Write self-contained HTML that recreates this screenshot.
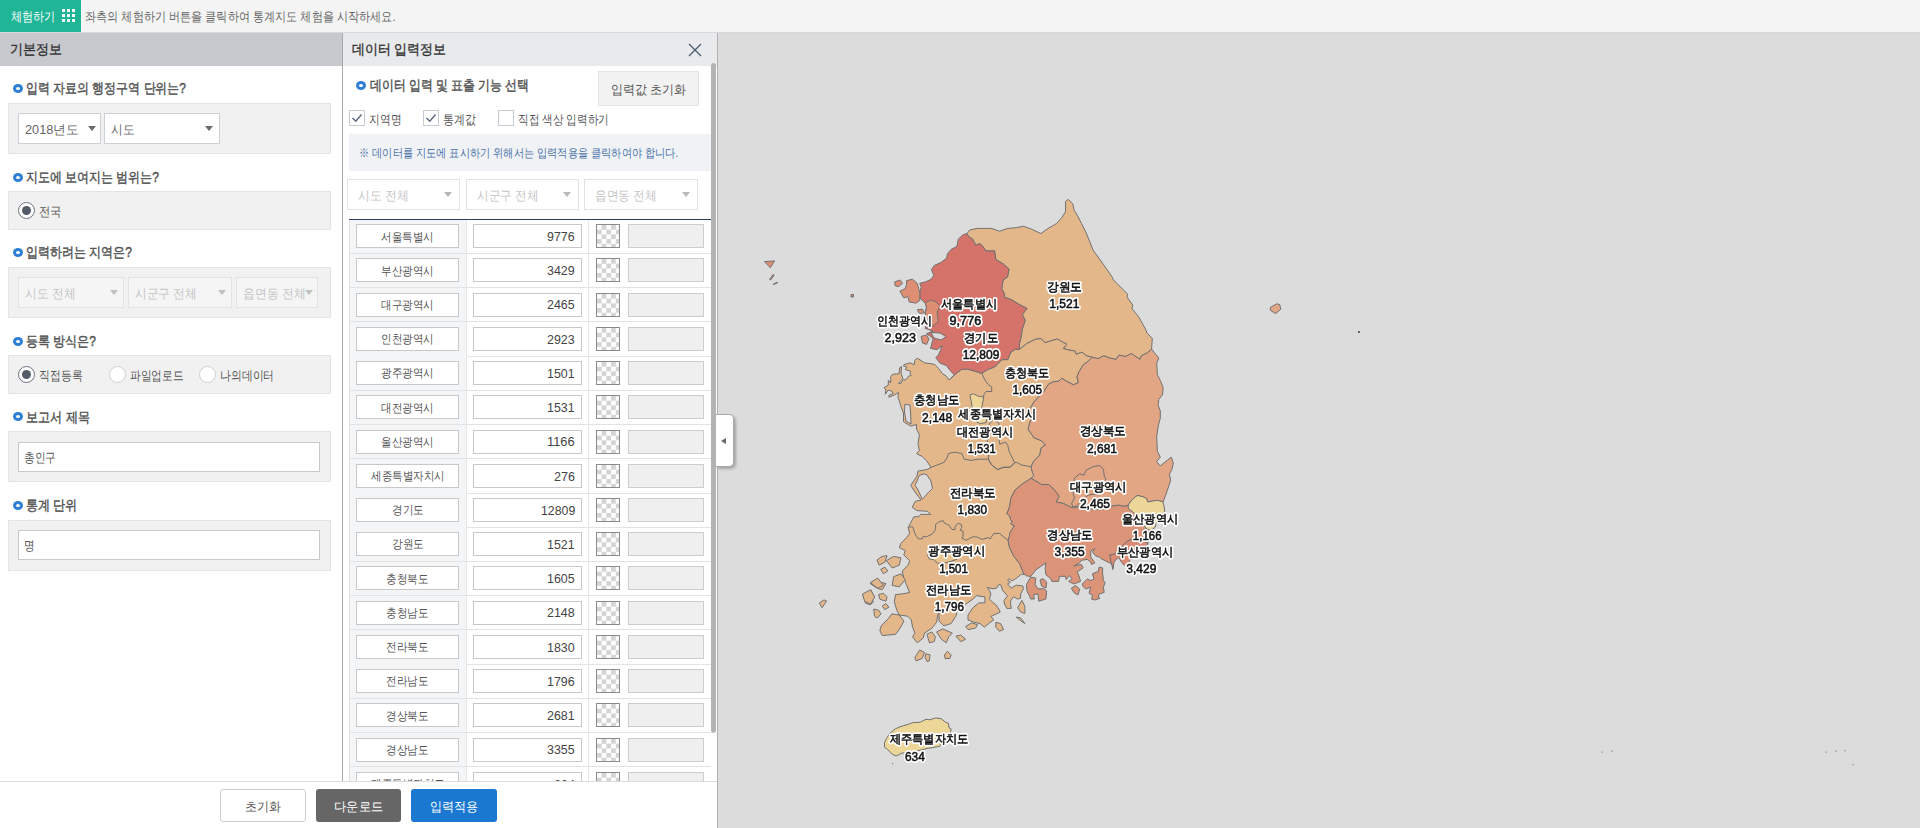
<!DOCTYPE html><html><head><meta charset="utf-8"><style>
*{box-sizing:border-box;margin:0;padding:0}
html,body{width:1920px;height:828px;overflow:hidden;background:#dcdcdc;font-family:"Liberation Sans",sans-serif;color:#555}
.a{position:absolute}
.t{position:absolute;white-space:nowrap;line-height:1;transform-origin:0 50%}
.bul{position:absolute;width:10px;height:9px;border-radius:50%;background:#2f80d5}
.bul:after{content:"";position:absolute;left:3px;top:3px;width:4px;height:3px;border-radius:50%;background:#fff}
.box{position:absolute;background:#f1f1f1;border:1px solid #e4e4e4}
.sel{position:absolute;background:#fff;border:1px solid #ccd0d6}
.arr{position:absolute;width:0;height:0;border-left:4.5px solid transparent;border-right:4.5px solid transparent;border-top:5px solid #6a6a6a}
.dsel{position:absolute;background:#f5f5f5;border:1px solid #e3e3e3}
.radio{position:absolute;width:17px;height:17px;border-radius:50%;border:1.2px solid #6b7280;background:#fff}
.radio.on:after{content:"";position:absolute;left:2.8px;top:2.8px;width:9px;height:9px;border-radius:50%;background:#545c6a}
.radio.off{border-color:#cfcfcf}
.inp{position:absolute;background:#fff;border:1px solid #c9c9c9}
.cb{position:absolute;width:16px;height:16px;border:1px solid #c5cad3;background:#fff}
.lbl{position:absolute;background:#fff;border:1px solid #c8c8c8}
.chk{position:absolute;width:24px;height:24px;border:1px solid #8a8a8a;background:repeating-conic-gradient(#d4d4d4 0 25%,#fff 0 50%) 0 0/9.4px 9.4px}
.cin{position:absolute;background:#efefef;border:1px solid #cdcdcd}
</style></head><body>
<div class="a" style="left:0;top:0;width:1920px;height:32px;background:#f4f4f4"></div>
<div class="a" style="left:0;top:0;width:81px;height:32px;background:#21b598"></div>
<div class="a" style="left:0;top:32px;width:1920px;height:1px;background:#d7d8db"></div>
<div class="t" style="left:11.10px;top:9.50px;font-size:13px;color:#fff;font-weight:normal;transform:scaleX(0.8538);">체험하기</div>
<div class="a" style="left:62px;top:9px;width:3px;height:3px;background:#fff"></div>
<div class="a" style="left:62px;top:14px;width:3px;height:3px;background:#fff"></div>
<div class="a" style="left:62px;top:19px;width:3px;height:3px;background:#fff"></div>
<div class="a" style="left:67px;top:9px;width:3px;height:3px;background:#fff"></div>
<div class="a" style="left:67px;top:14px;width:3px;height:3px;background:#fff"></div>
<div class="a" style="left:67px;top:19px;width:3px;height:3px;background:#fff"></div>
<div class="a" style="left:72px;top:9px;width:3px;height:3px;background:#fff"></div>
<div class="a" style="left:72px;top:14px;width:3px;height:3px;background:#fff"></div>
<div class="a" style="left:72px;top:19px;width:3px;height:3px;background:#fff"></div>
<div class="t" style="left:85.00px;top:9.50px;font-size:13px;color:#666;font-weight:normal;transform:scaleX(0.8547);">좌측의 체험하기 버튼을 클릭하여 통계지도 체험을 시작하세요.</div>
<div class="a" style="left:0;top:33px;width:342px;height:748px;background:#fff"></div>
<div class="a" style="left:0;top:33px;width:342px;height:33px;background:#c8c9ce"></div>
<div class="t" style="left:9.50px;top:42.20px;font-size:14px;color:#333;font-weight:normal;-webkit-text-stroke:0.35px #333;transform:scaleX(0.9286);">기본정보</div>
<div class="a" style="left:342px;top:33px;width:1px;height:748px;background:#a9a9a9"></div>
<div class="bul" style="left:13px;top:83.9px"></div>
<div class="t" style="left:25.50px;top:81.40px;font-size:14px;color:#555;font-weight:normal;-webkit-text-stroke:0.45px #555;transform:scaleX(0.8535);">입력 자료의 행정구역 단위는?</div>
<div class="box" style="left:8px;top:103px;width:323px;height:51px"></div>
<div class="sel" style="left:18px;top:113px;width:83px;height:31px"><div class="arr" style="left:69px;top:12px"></div></div>
<div class="t" style="left:25.10px;top:122.90px;font-size:13px;color:#666;font-weight:normal;transform:scaleX(0.9814);">2018년도</div>
<div class="sel" style="left:104px;top:113px;width:116px;height:31px"><div class="arr" style="left:100px;top:12px"></div></div>
<div class="t" style="left:111.40px;top:122.90px;font-size:13px;color:#666;font-weight:normal;transform:scaleX(0.9038);">시도</div>
<div class="bul" style="left:13px;top:172.5px"></div>
<div class="t" style="left:25.50px;top:170.00px;font-size:14px;color:#555;font-weight:normal;-webkit-text-stroke:0.45px #555;transform:scaleX(0.8549);">지도에 보여지는 범위는?</div>
<div class="box" style="left:8px;top:191px;width:323px;height:39px"></div>
<div class="radio on" style="left:18px;top:202px"></div>
<div class="t" style="left:38.80px;top:204.80px;font-size:13px;color:#555;font-weight:normal;transform:scaleX(0.8692);">전국</div>
<div class="bul" style="left:13px;top:247.5px"></div>
<div class="t" style="left:25.50px;top:245.00px;font-size:14px;color:#555;font-weight:normal;-webkit-text-stroke:0.45px #555;transform:scaleX(0.8570);">입력하려는 지역은?</div>
<div class="box" style="left:8px;top:267px;width:323px;height:51px"></div>
<div class="dsel" style="left:18px;top:277px;width:106px;height:31px"><div class="arr" style="left:91px;top:12px;border-top-color:#c0c0c0"></div></div>
<div class="t" style="left:24.90px;top:286.90px;font-size:13px;color:#c4c4c4;font-weight:normal;transform:scaleX(0.9079);">시도 전체</div>
<div class="dsel" style="left:128px;top:277px;width:104px;height:31px"><div class="arr" style="left:89px;top:12px;border-top-color:#c0c0c0"></div></div>
<div class="t" style="left:135.30px;top:286.90px;font-size:13px;color:#c4c4c4;font-weight:normal;transform:scaleX(0.9020);">시군구 전체</div>
<div class="dsel" style="left:236px;top:277px;width:82px;height:31px"><div class="arr" style="left:68px;top:12px;border-top-color:#c0c0c0"></div></div>
<div class="t" style="left:242.60px;top:286.90px;font-size:13px;color:#c4c4c4;font-weight:normal;transform:scaleX(0.9107);">읍면동 전체</div>
<div class="bul" style="left:13px;top:336.5px"></div>
<div class="t" style="left:25.50px;top:334.00px;font-size:14px;color:#555;font-weight:normal;-webkit-text-stroke:0.45px #555;transform:scaleX(0.8569);">등록 방식은?</div>
<div class="box" style="left:8px;top:355px;width:323px;height:39px"></div>
<div class="radio on" style="left:18px;top:366px"></div>
<div class="t" style="left:38.80px;top:368.50px;font-size:13px;color:#555;font-weight:normal;transform:scaleX(0.8346);">직접등록</div>
<div class="radio off" style="left:109px;top:366px"></div>
<div class="t" style="left:129.50px;top:368.50px;font-size:13px;color:#555;font-weight:normal;transform:scaleX(0.8262);">파일업로드</div>
<div class="radio off" style="left:199px;top:366px"></div>
<div class="t" style="left:219.80px;top:368.50px;font-size:13px;color:#555;font-weight:normal;transform:scaleX(0.8354);">나의데이터</div>
<div class="bul" style="left:13px;top:412.1px"></div>
<div class="t" style="left:25.50px;top:409.60px;font-size:14px;color:#555;font-weight:normal;-webkit-text-stroke:0.45px #555;transform:scaleX(0.8621);">보고서 제목</div>
<div class="box" style="left:8px;top:431px;width:323px;height:51px"></div>
<div class="inp" style="left:18px;top:442px;width:302px;height:30px"></div>
<div class="t" style="left:23.60px;top:451.40px;font-size:13px;color:#555;font-weight:normal;transform:scaleX(0.8256);">총인구</div>
<div class="bul" style="left:13px;top:500.5px"></div>
<div class="t" style="left:25.50px;top:498.00px;font-size:14px;color:#555;font-weight:normal;-webkit-text-stroke:0.45px #555;transform:scaleX(0.8599);">통계 단위</div>
<div class="box" style="left:8px;top:520px;width:323px;height:51px"></div>
<div class="inp" style="left:18px;top:530px;width:302px;height:30px"></div>
<div class="t" style="left:23.60px;top:538.90px;font-size:13px;color:#555;font-weight:normal;transform:scaleX(0.8231);">명</div>
<div class="a" style="left:343px;top:33px;width:374px;height:748px;background:#fff;overflow:hidden">
<div class="a" style="left:0;top:0;width:374px;height:33px;background:#e9eaec"></div>
</div>
<div class="t" style="left:352.20px;top:41.80px;font-size:14px;color:#333;font-weight:normal;-webkit-text-stroke:0.35px #333;transform:scaleX(0.9255);">데이터 입력정보</div>
<svg class="a" style="left:687.8px;top:42.9px" width="14" height="14" viewBox="0 0 14 14"><path d="M1 1L13 13M13 1L1 13" stroke="#4b5a6e" stroke-width="1.3" fill="none"/></svg>
<div class="bul" style="left:356px;top:80.8px"></div>
<div class="t" style="left:369.50px;top:78.00px;font-size:14px;color:#555;font-weight:normal;-webkit-text-stroke:0.45px #555;transform:scaleX(0.8498);">데이터 입력 및 표출 기능 선택</div>
<div class="a" style="left:598px;top:71px;width:101px;height:35px;background:#f2f2f2;border:1px solid #e4e4e4"></div>
<div class="t" style="left:610.80px;top:83.00px;font-size:13px;color:#555;font-weight:normal;transform:scaleX(0.9250);">입력값 초기화</div>
<div class="cb" style="left:348.5px;top:110px"></div>
<svg class="a" style="left:348.5px;top:110px" width="16" height="16" viewBox="0 0 16 16"><path d="M3.5 8L6.8 11.2L12.5 4.5" stroke="#5b6b80" stroke-width="1.5" fill="none"/></svg>
<div class="t" style="left:368.50px;top:112.70px;font-size:13px;color:#555;font-weight:normal;transform:scaleX(0.8308);">지역명</div>
<div class="cb" style="left:422.5px;top:110px"></div>
<svg class="a" style="left:422.5px;top:110px" width="16" height="16" viewBox="0 0 16 16"><path d="M3.5 8L6.8 11.2L12.5 4.5" stroke="#5b6b80" stroke-width="1.5" fill="none"/></svg>
<div class="t" style="left:442.80px;top:112.70px;font-size:13px;color:#555;font-weight:normal;transform:scaleX(0.8462);">통계값</div>
<div class="cb" style="left:497.5px;top:110px"></div>
<div class="t" style="left:517.80px;top:112.70px;font-size:13px;color:#555;font-weight:normal;transform:scaleX(0.8181);">직접 색상 입력하기</div>
<div class="a" style="left:349px;top:134px;width:362px;height:37px;background:#f0f2f5"></div>
<div class="t" style="left:358.80px;top:147.20px;font-size:12px;color:#4a72a8;font-weight:normal;transform:scaleX(0.8525);">※ 데이터를 지도에 표시하기 위해서는 입력적용을 클릭하여야 합니다.</div>
<div class="a" style="left:347px;top:179px;width:113px;height:31px;background:#fff;border:1px solid #e2e2e2"><div class="arr" style="left:96px;top:12px;border-top-color:#b9b9b9"></div></div>
<div class="t" style="left:357.50px;top:189.00px;font-size:13px;color:#c4c4c4;font-weight:normal;transform:scaleX(0.9097);">시도 전체</div>
<div class="a" style="left:466px;top:179px;width:113px;height:31px;background:#fff;border:1px solid #e2e2e2"><div class="arr" style="left:96px;top:12px;border-top-color:#b9b9b9"></div></div>
<div class="t" style="left:476.70px;top:189.00px;font-size:13px;color:#c4c4c4;font-weight:normal;transform:scaleX(0.8947);">시군구 전체</div>
<div class="a" style="left:584px;top:179px;width:114px;height:31px;background:#fff;border:1px solid #e2e2e2"><div class="arr" style="left:97px;top:12px;border-top-color:#b9b9b9"></div></div>
<div class="t" style="left:595.10px;top:189.00px;font-size:13px;color:#c4c4c4;font-weight:normal;transform:scaleX(0.9005);">읍면동 전체</div>
<div class="a" style="left:343px;top:219px;width:374px;height:562px;overflow:hidden">
<div class="a" style="left:6px;top:0px;width:362px;height:1.2px;background:#2b3d5e"></div>
<div class="a" style="left:6px;top:0.50px;width:117px;height:34.22px;background:#f4f5f7"></div>
<div class="a" style="left:6px;top:34.02px;width:362px;height:1px;background:#e3e3e3"></div>
<div class="lbl" style="left:13px;top:5.20px;width:103px;height:24px"></div>
<div class="lbl" style="left:130px;top:5.20px;width:109px;height:24px"></div>
<div class="chk" style="left:253px;top:5.20px"></div>
<div class="cin" style="left:285px;top:5.20px;width:76px;height:24px"></div>
<div class="a" style="left:6px;top:34.72px;width:117px;height:34.22px;background:#f4f5f7"></div>
<div class="a" style="left:6px;top:68.24px;width:362px;height:1px;background:#e3e3e3"></div>
<div class="lbl" style="left:13px;top:39.42px;width:103px;height:24px"></div>
<div class="lbl" style="left:130px;top:39.42px;width:109px;height:24px"></div>
<div class="chk" style="left:253px;top:39.42px"></div>
<div class="cin" style="left:285px;top:39.42px;width:76px;height:24px"></div>
<div class="a" style="left:6px;top:68.94px;width:117px;height:34.22px;background:#f4f5f7"></div>
<div class="a" style="left:6px;top:102.46px;width:362px;height:1px;background:#e3e3e3"></div>
<div class="lbl" style="left:13px;top:73.64px;width:103px;height:24px"></div>
<div class="lbl" style="left:130px;top:73.64px;width:109px;height:24px"></div>
<div class="chk" style="left:253px;top:73.64px"></div>
<div class="cin" style="left:285px;top:73.64px;width:76px;height:24px"></div>
<div class="a" style="left:6px;top:103.16px;width:117px;height:34.22px;background:#f4f5f7"></div>
<div class="a" style="left:6px;top:136.68px;width:362px;height:1px;background:#e3e3e3"></div>
<div class="lbl" style="left:13px;top:107.86px;width:103px;height:24px"></div>
<div class="lbl" style="left:130px;top:107.86px;width:109px;height:24px"></div>
<div class="chk" style="left:253px;top:107.86px"></div>
<div class="cin" style="left:285px;top:107.86px;width:76px;height:24px"></div>
<div class="a" style="left:6px;top:137.38px;width:117px;height:34.22px;background:#f4f5f7"></div>
<div class="a" style="left:6px;top:170.90px;width:362px;height:1px;background:#e3e3e3"></div>
<div class="lbl" style="left:13px;top:142.08px;width:103px;height:24px"></div>
<div class="lbl" style="left:130px;top:142.08px;width:109px;height:24px"></div>
<div class="chk" style="left:253px;top:142.08px"></div>
<div class="cin" style="left:285px;top:142.08px;width:76px;height:24px"></div>
<div class="a" style="left:6px;top:171.60px;width:117px;height:34.22px;background:#f4f5f7"></div>
<div class="a" style="left:6px;top:205.12px;width:362px;height:1px;background:#e3e3e3"></div>
<div class="lbl" style="left:13px;top:176.30px;width:103px;height:24px"></div>
<div class="lbl" style="left:130px;top:176.30px;width:109px;height:24px"></div>
<div class="chk" style="left:253px;top:176.30px"></div>
<div class="cin" style="left:285px;top:176.30px;width:76px;height:24px"></div>
<div class="a" style="left:6px;top:205.82px;width:117px;height:34.22px;background:#f4f5f7"></div>
<div class="a" style="left:6px;top:239.34px;width:362px;height:1px;background:#e3e3e3"></div>
<div class="lbl" style="left:13px;top:210.52px;width:103px;height:24px"></div>
<div class="lbl" style="left:130px;top:210.52px;width:109px;height:24px"></div>
<div class="chk" style="left:253px;top:210.52px"></div>
<div class="cin" style="left:285px;top:210.52px;width:76px;height:24px"></div>
<div class="a" style="left:6px;top:240.04px;width:117px;height:34.22px;background:#f4f5f7"></div>
<div class="a" style="left:6px;top:273.56px;width:362px;height:1px;background:#e3e3e3"></div>
<div class="lbl" style="left:13px;top:244.74px;width:103px;height:24px"></div>
<div class="lbl" style="left:130px;top:244.74px;width:109px;height:24px"></div>
<div class="chk" style="left:253px;top:244.74px"></div>
<div class="cin" style="left:285px;top:244.74px;width:76px;height:24px"></div>
<div class="a" style="left:6px;top:274.26px;width:117px;height:34.22px;background:#f4f5f7"></div>
<div class="a" style="left:6px;top:307.78px;width:362px;height:1px;background:#e3e3e3"></div>
<div class="lbl" style="left:13px;top:278.96px;width:103px;height:24px"></div>
<div class="lbl" style="left:130px;top:278.96px;width:109px;height:24px"></div>
<div class="chk" style="left:253px;top:278.96px"></div>
<div class="cin" style="left:285px;top:278.96px;width:76px;height:24px"></div>
<div class="a" style="left:6px;top:308.48px;width:117px;height:34.22px;background:#f4f5f7"></div>
<div class="a" style="left:6px;top:342.00px;width:362px;height:1px;background:#e3e3e3"></div>
<div class="lbl" style="left:13px;top:313.18px;width:103px;height:24px"></div>
<div class="lbl" style="left:130px;top:313.18px;width:109px;height:24px"></div>
<div class="chk" style="left:253px;top:313.18px"></div>
<div class="cin" style="left:285px;top:313.18px;width:76px;height:24px"></div>
<div class="a" style="left:6px;top:342.70px;width:117px;height:34.22px;background:#f4f5f7"></div>
<div class="a" style="left:6px;top:376.22px;width:362px;height:1px;background:#e3e3e3"></div>
<div class="lbl" style="left:13px;top:347.40px;width:103px;height:24px"></div>
<div class="lbl" style="left:130px;top:347.40px;width:109px;height:24px"></div>
<div class="chk" style="left:253px;top:347.40px"></div>
<div class="cin" style="left:285px;top:347.40px;width:76px;height:24px"></div>
<div class="a" style="left:6px;top:376.92px;width:117px;height:34.22px;background:#f4f5f7"></div>
<div class="a" style="left:6px;top:410.44px;width:362px;height:1px;background:#e3e3e3"></div>
<div class="lbl" style="left:13px;top:381.62px;width:103px;height:24px"></div>
<div class="lbl" style="left:130px;top:381.62px;width:109px;height:24px"></div>
<div class="chk" style="left:253px;top:381.62px"></div>
<div class="cin" style="left:285px;top:381.62px;width:76px;height:24px"></div>
<div class="a" style="left:6px;top:411.14px;width:117px;height:34.22px;background:#f4f5f7"></div>
<div class="a" style="left:6px;top:444.66px;width:362px;height:1px;background:#e3e3e3"></div>
<div class="lbl" style="left:13px;top:415.84px;width:103px;height:24px"></div>
<div class="lbl" style="left:130px;top:415.84px;width:109px;height:24px"></div>
<div class="chk" style="left:253px;top:415.84px"></div>
<div class="cin" style="left:285px;top:415.84px;width:76px;height:24px"></div>
<div class="a" style="left:6px;top:445.36px;width:117px;height:34.22px;background:#f4f5f7"></div>
<div class="a" style="left:6px;top:478.88px;width:362px;height:1px;background:#e3e3e3"></div>
<div class="lbl" style="left:13px;top:450.06px;width:103px;height:24px"></div>
<div class="lbl" style="left:130px;top:450.06px;width:109px;height:24px"></div>
<div class="chk" style="left:253px;top:450.06px"></div>
<div class="cin" style="left:285px;top:450.06px;width:76px;height:24px"></div>
<div class="a" style="left:6px;top:479.58px;width:117px;height:34.22px;background:#f4f5f7"></div>
<div class="a" style="left:6px;top:513.10px;width:362px;height:1px;background:#e3e3e3"></div>
<div class="lbl" style="left:13px;top:484.28px;width:103px;height:24px"></div>
<div class="lbl" style="left:130px;top:484.28px;width:109px;height:24px"></div>
<div class="chk" style="left:253px;top:484.28px"></div>
<div class="cin" style="left:285px;top:484.28px;width:76px;height:24px"></div>
<div class="a" style="left:6px;top:513.80px;width:117px;height:34.22px;background:#f4f5f7"></div>
<div class="a" style="left:6px;top:547.32px;width:362px;height:1px;background:#e3e3e3"></div>
<div class="lbl" style="left:13px;top:518.50px;width:103px;height:24px"></div>
<div class="lbl" style="left:130px;top:518.50px;width:109px;height:24px"></div>
<div class="chk" style="left:253px;top:518.50px"></div>
<div class="cin" style="left:285px;top:518.50px;width:76px;height:24px"></div>
<div class="a" style="left:6px;top:548.02px;width:117px;height:34.22px;background:#f4f5f7"></div>
<div class="a" style="left:6px;top:581.54px;width:362px;height:1px;background:#e3e3e3"></div>
<div class="lbl" style="left:13px;top:552.72px;width:103px;height:24px"></div>
<div class="lbl" style="left:130px;top:552.72px;width:109px;height:24px"></div>
<div class="chk" style="left:253px;top:552.72px"></div>
<div class="cin" style="left:285px;top:552.72px;width:76px;height:24px"></div>
<div class="a" style="left:6px;top:1.5px;width:1px;height:600px;background:#e3e3e3"></div>
<div class="a" style="left:123px;top:1.5px;width:1px;height:600px;background:#e6e6e6"></div>
<div class="a" style="left:245px;top:1.5px;width:1px;height:600px;background:#e6e6e6"></div>
<div class="t" style="left:38.12px;top:11.50px;font-size:12px;color:#555;font-weight:normal;transform:scaleX(0.8792);">서울특별시</div>
<div class="t" style="left:204.40px;top:11.00px;font-size:13px;color:#444;font-weight:normal;transform:scaleX(0.9543);">9776</div>
<div class="t" style="left:38.12px;top:45.72px;font-size:12px;color:#555;font-weight:normal;transform:scaleX(0.8792);">부산광역시</div>
<div class="t" style="left:204.40px;top:45.22px;font-size:13px;color:#444;font-weight:normal;transform:scaleX(0.9543);">3429</div>
<div class="t" style="left:38.12px;top:79.94px;font-size:12px;color:#555;font-weight:normal;transform:scaleX(0.8792);">대구광역시</div>
<div class="t" style="left:204.40px;top:79.44px;font-size:13px;color:#444;font-weight:normal;transform:scaleX(0.9543);">2465</div>
<div class="t" style="left:38.12px;top:114.16px;font-size:12px;color:#555;font-weight:normal;transform:scaleX(0.8792);">인천광역시</div>
<div class="t" style="left:204.40px;top:113.66px;font-size:13px;color:#444;font-weight:normal;transform:scaleX(0.9543);">2923</div>
<div class="t" style="left:38.12px;top:148.38px;font-size:12px;color:#555;font-weight:normal;transform:scaleX(0.8792);">광주광역시</div>
<div class="t" style="left:204.40px;top:147.88px;font-size:13px;color:#444;font-weight:normal;transform:scaleX(0.9543);">1501</div>
<div class="t" style="left:38.12px;top:182.60px;font-size:12px;color:#555;font-weight:normal;transform:scaleX(0.8792);">대전광역시</div>
<div class="t" style="left:204.40px;top:182.10px;font-size:13px;color:#444;font-weight:normal;transform:scaleX(0.9543);">1531</div>
<div class="t" style="left:38.12px;top:216.82px;font-size:12px;color:#555;font-weight:normal;transform:scaleX(0.8792);">울산광역시</div>
<div class="t" style="left:204.40px;top:216.32px;font-size:13px;color:#444;font-weight:normal;transform:scaleX(0.9868);">1166</div>
<div class="t" style="left:27.68px;top:251.04px;font-size:12px;color:#555;font-weight:normal;transform:scaleX(0.8768);">세종특별자치시</div>
<div class="t" style="left:211.05px;top:250.54px;font-size:13px;color:#444;font-weight:normal;transform:scaleX(0.9653);">276</div>
<div class="t" style="left:48.58px;top:285.26px;font-size:12px;color:#555;font-weight:normal;transform:scaleX(0.8847);">경기도</div>
<div class="t" style="left:197.75px;top:284.76px;font-size:13px;color:#444;font-weight:normal;transform:scaleX(0.9473);">12809</div>
<div class="t" style="left:48.58px;top:319.48px;font-size:12px;color:#555;font-weight:normal;transform:scaleX(0.8847);">강원도</div>
<div class="t" style="left:204.40px;top:318.98px;font-size:13px;color:#444;font-weight:normal;transform:scaleX(0.9543);">1521</div>
<div class="t" style="left:43.35px;top:353.70px;font-size:12px;color:#555;font-weight:normal;transform:scaleX(0.8812);">충청북도</div>
<div class="t" style="left:204.40px;top:353.20px;font-size:13px;color:#444;font-weight:normal;transform:scaleX(0.9543);">1605</div>
<div class="t" style="left:43.35px;top:387.92px;font-size:12px;color:#555;font-weight:normal;transform:scaleX(0.8812);">충청남도</div>
<div class="t" style="left:204.40px;top:387.42px;font-size:13px;color:#444;font-weight:normal;transform:scaleX(0.9543);">2148</div>
<div class="t" style="left:43.35px;top:422.14px;font-size:12px;color:#555;font-weight:normal;transform:scaleX(0.8812);">전라북도</div>
<div class="t" style="left:204.40px;top:421.64px;font-size:13px;color:#444;font-weight:normal;transform:scaleX(0.9543);">1830</div>
<div class="t" style="left:43.35px;top:456.36px;font-size:12px;color:#555;font-weight:normal;transform:scaleX(0.8812);">전라남도</div>
<div class="t" style="left:204.40px;top:455.86px;font-size:13px;color:#444;font-weight:normal;transform:scaleX(0.9543);">1796</div>
<div class="t" style="left:43.35px;top:490.58px;font-size:12px;color:#555;font-weight:normal;transform:scaleX(0.8812);">경상북도</div>
<div class="t" style="left:204.40px;top:490.08px;font-size:13px;color:#444;font-weight:normal;transform:scaleX(0.9543);">2681</div>
<div class="t" style="left:43.35px;top:524.80px;font-size:12px;color:#555;font-weight:normal;transform:scaleX(0.8812);">경상남도</div>
<div class="t" style="left:204.40px;top:524.30px;font-size:13px;color:#444;font-weight:normal;transform:scaleX(0.9543);">3355</div>
<div class="t" style="left:27.68px;top:559.02px;font-size:12px;color:#555;font-weight:normal;transform:scaleX(0.8768);">제주특별자치도</div>
<div class="t" style="left:211.05px;top:558.52px;font-size:13px;color:#444;font-weight:normal;transform:scaleX(0.9653);">634</div>
</div>
<div class="a" style="left:711px;top:66px;width:6px;height:715px;background:#fff"></div>
<div class="a" style="left:711px;top:63px;width:4.8px;height:670px;background:#b3b3b3;border-radius:2.4px"></div>
<div class="a" style="left:717px;top:33px;width:1px;height:795px;background:#b0b0b0"></div>
<div class="a" style="left:0;top:781px;width:717px;height:47px;background:#fff;border-top:1px solid #dcdcdc"></div>
<div class="a" style="left:220px;top:789px;width:86px;height:33px;background:#fff;border:1px solid #cfcfcf;border-radius:3px"></div>
<div class="t" style="left:245.00px;top:800.30px;font-size:13px;color:#555;font-weight:normal;transform:scaleX(0.9231);">초기화</div>
<div class="a" style="left:316px;top:789px;width:85px;height:33px;background:#666;border-radius:3px"></div>
<div class="t" style="left:334.00px;top:800.30px;font-size:13px;color:#fff;font-weight:normal;transform:scaleX(0.9462);">다운로드</div>
<div class="a" style="left:411px;top:789px;width:86px;height:33px;background:#1b78d0;border-radius:3px"></div>
<div class="t" style="left:429.90px;top:800.30px;font-size:13px;color:#fff;font-weight:normal;transform:scaleX(0.9308);">입력적용</div>
<svg class="a" style="left:0;top:0;will-change:transform" width="1920" height="828" viewBox="0 0 1920 828">
<g stroke="#707070" stroke-width="1" stroke-linejoin="round">
<path d="M967.0 233.5 L969.9 229.9 L977.1 228.4 L991.6 228.4 L999.6 231.3 L1007.5 228.4 L1016.2 227.7 L1023.5 226.2 L1031.4 229.1 L1040.9 233.5 L1048.1 228.4 L1053.2 225.5 L1056.8 223.3 L1061.9 217.5 L1065.5 211.7 L1065.5 201.6 L1068.4 199.4 L1072.8 203.8 L1074.2 210.3 L1077.8 216.1 L1081.4 223.3 L1085.8 232.0 L1089.4 240.7 L1093.0 250.0 L1100.0 259.6 L1112.5 277.5 L1113.2 279.7 L1127.7 294.2 L1127.0 297.1 L1132.8 305.1 L1132.0 308.7 L1138.6 316.7 L1145.8 329.7 L1147.2 333.3 L1152.3 338.4 L1151.6 349.0 L1147.2 352.9 L1141.4 355.8 L1140.0 359.4 L1131.3 353.6 L1125.5 356.5 L1119.0 355.1 L1116.1 359.4 L1109.6 358.0 L1103.8 355.8 L1098.0 358.7 L1092.2 357.2 L1086.4 355.8 L1082.0 352.2 L1076.2 354.3 L1074.8 351.0 L1069.0 350.0 L1063.2 348.6 L1066.8 344.2 L1063.9 342.8 L1057.4 339.0 L1051.6 340.6 L1045.0 342.8 L1041.2 338.6 L1035.4 339.3 L1026.7 343.6 L1019.4 349.4 L1019.4 343.6 L1020.9 337.8 L1022.3 329.1 L1025.2 320.4 L1022.3 314.6 L1027.0 308.5 L1019.2 304.5 L1012.0 300.0 L1004.0 297.0 L1004.6 294.3 L1001.7 288.6 L1003.2 279.9 L1007.5 277.0 L1009.0 269.0 L1003.2 263.9 L995.9 259.6 L994.5 250.9 L985.8 250.9 L982.9 246.5 L980.0 243.6 L975.7 245.1 L972.8 239.3 L968.4 236.4 L967.0 233.5 Z" fill="#e3b78a"/>
<path d="M954.4 374.9 L949.0 380.0 L954.4 374.9 L961.4 369.5 L967.2 369.0 L975.9 371.5 L981.7 373.3 L987.5 369.7 L994.8 366.8 L1002.0 359.6 L1007.8 359.6 L1010.7 352.3 L1015.1 349.4 L1019.4 349.4 L1026.7 343.6 L1035.4 339.3 L1041.2 338.6 L1045.0 342.8 L1051.6 340.6 L1057.4 339.0 L1063.9 342.8 L1066.8 344.2 L1063.2 348.6 L1069.0 350.0 L1074.8 351.0 L1076.2 354.3 L1082.0 352.2 L1086.4 355.8 L1092.2 357.2 L1087.8 361.6 L1083.5 364.5 L1079.1 371.7 L1077.0 376.8 L1078.4 382.6 L1073.3 384.8 L1068.0 382.0 L1061.7 378.3 L1058.8 381.2 L1053.0 381.9 L1048.5 384.2 L1044.0 391.4 L1038.3 397.2 L1033.9 402.0 L1030.0 408.7 L1031.0 418.8 L1028.1 429.0 L1033.9 437.7 L1041.2 440.6 L1045.5 444.9 L1041.2 447.8 L1039.7 455.1 L1033.9 460.9 L1031.0 466.7 L1032.5 472.5 L1033.9 475.4 L1031.0 478.3 L1022.3 484.0 L1015.1 489.9 L1010.7 498.6 L1010.0 505.0 L1008.8 508.8 L1006.9 513.8 L1010.0 516.3 L1010.6 520.0 L1012.5 521.3 L1010.6 523.8 L1014.4 525.6 L1012.5 528.8 L1010.0 532.5 L1009.4 536.3 L1008.1 540.4 L1009.6 547.7 L1013.9 556.4 L1019.7 563.6 L1022.6 570.9 L1024.2 574.3 L1021.3 574.3 L1017.7 577.2 L1014.8 579.4 L1011.9 580.9 L1009.0 578.7 L1007.5 580.1 L1010.4 582.3 L1007.5 583.8 L1011.2 588.1 L1016.2 585.2 L1022.8 585.9 L1023.5 588.8 L1020.6 593.9 L1020.6 598.3 L1017.7 599.0 L1013.3 596.8 L1010.4 601.2 L1011.2 608.4 L1006.8 608.4 L1004.6 604.1 L1003.9 600.4 L1007.5 596.1 L1002.5 590.3 L1001.0 585.2 L998.8 584.5 L996.7 588.1 L993.0 588.8 L987.2 587.4 L989.4 590.3 L990.9 593.9 L989.4 599.0 L992.3 601.9 L995.9 604.8 L998.8 609.1 L1000.3 612.0 L995.9 614.2 L990.9 616.4 L993.8 620.0 L989.4 622.9 L984.3 627.2 L980.1 623.5 L974.1 622.3 L968.0 619.9 L968.0 615.0 L972.8 607.8 L978.9 602.9 L984.9 602.9 L984.9 596.9 L976.5 595.7 L972.8 599.3 L965.6 604.2 L960.8 609.0 L957.1 611.4 L955.9 616.2 L951.1 623.5 L943.9 625.9 L939.0 621.1 L939.0 612.6 L937.8 615.0 L936.6 622.3 L931.8 628.3 L924.5 633.1 L923.3 638.0 L917.3 642.8 L912.5 636.8 L914.9 633.1 L912.5 627.1 L911.3 619.9 L907.6 616.2 L899.2 615.0 L896.8 610.2 L894.3 601.7 L895.6 594.5 L900.9 594.1 L909.6 592.6 L906.7 585.4 L903.8 578.1 L902.3 570.9 L908.1 565.1 L909.6 560.7 L903.8 554.9 L905.2 550.6 L899.4 547.7 L900.9 543.3 L906.7 537.5 L909.6 533.2 L908.1 527.4 L908.8 526.3 L913.8 516.9 L918.8 516.6 L920.6 514.4 L930.6 514.4 L927.5 511.3 L916.9 510.6 L912.2 507.2 L915.1 501.4 L921.0 500.0 L915.0 492.0 L910.7 485.5 L913.0 482.0 L917.0 476.0 L918.0 471.0 L926.7 469.6 L931.0 467.4 L926.7 460.9 L922.3 456.5 L916.5 453.6 L919.4 450.7 L918.0 443.5 L919.4 434.8 L916.5 429.0 L916.5 424.6 L910.7 426.1 L903.5 421.7 L903.5 413.0 L900.6 405.8 L899.7 402.1 L897.9 397.2 L898.5 392.4 L894.9 394.8 L888.9 397.2 L888.9 395.4 L893.1 393.6 L891.9 391.2 L888.3 390.0 L885.3 394.2 L885.9 390.0 L884.1 387.6 L888.3 385.2 L888.3 380.3 L890.7 382.8 L890.7 376.7 L892.5 374.3 L899.1 373.7 L899.7 367.7 L901.6 366.5 L901.0 373.1 L902.8 378.5 L901.6 379.7 L898.5 383.4 L901.0 383.4 L903.4 379.1 L905.2 380.3 L908.8 376.1 L911.2 375.5 L910.0 374.3 L910.6 371.3 L905.2 369.5 L907.0 367.1 L903.4 365.9 L904.0 364.7 L910.0 362.8 L914.2 364.7 L914.8 360.4 L917.2 358.0 L924.5 362.8 L932.9 364.0 L935.0 364.7 L938.4 368.3 L942.4 373.6 L946.4 376.2 L949.0 380.0 Z" fill="#e3b78a"/>
<path d="M1092.2 357.2 L1098.0 358.7 L1103.8 355.8 L1109.6 358.0 L1116.1 359.4 L1119.0 355.1 L1125.5 356.5 L1131.3 353.6 L1140.0 359.4 L1141.4 355.8 L1147.2 352.9 L1151.6 349.0 L1154.5 352.9 L1158.8 358.0 L1156.7 363.0 L1157.4 374.6 L1160.3 380.4 L1163.2 387.7 L1162.5 394.9 L1158.8 399.3 L1158.1 405.1 L1160.3 410.9 L1160.3 418.1 L1158.1 426.8 L1156.7 437.0 L1157.4 451.4 L1160.3 457.2 L1156.7 461.6 L1160.3 465.9 L1167.5 460.1 L1171.2 457.2 L1173.3 463.0 L1172.2 468.7 L1169.3 474.5 L1170.7 480.3 L1167.8 489.0 L1165.2 496.5 L1163.0 502.0 L1157.6 500.3 L1153.3 500.9 L1147.8 502.0 L1146.7 498.7 L1143.5 497.1 L1138.0 495.4 L1135.9 496.5 L1131.5 500.3 L1128.3 505.2 L1123.9 506.3 L1118.5 505.2 L1110.9 506.3 L1100.0 509.6 L1089.6 509.3 L1080.9 506.4 L1072.2 507.8 L1063.5 503.5 L1056.2 502.0 L1059.1 496.2 L1054.8 490.4 L1049.0 484.6 L1041.7 484.6 L1034.5 480.3 L1031.0 478.3 L1033.9 475.4 L1032.5 472.5 L1031.0 466.7 L1033.9 460.9 L1039.7 455.1 L1041.2 447.8 L1045.5 444.9 L1041.2 440.6 L1033.9 437.7 L1028.1 429.0 L1031.0 418.8 L1030.0 408.7 L1033.9 402.0 L1038.3 397.2 L1044.0 391.4 L1048.5 384.2 L1053.0 381.9 L1058.8 381.2 L1061.7 378.3 L1068.0 382.0 L1073.3 384.8 L1078.4 382.6 L1077.0 376.8 L1079.1 371.7 L1083.5 364.5 L1087.8 361.6 L1092.2 357.2 Z" fill="#e2a684"/>
<path d="M1008.1 540.4 L1009.6 547.7 L1013.9 556.4 L1019.7 563.6 L1022.6 570.9 L1024.2 574.3 L1026.4 575.8 L1030.7 576.5 L1035.8 570.0 L1040.0 567.0 L1045.9 562.8 L1045.1 567.9 L1045.9 574.7 L1051.0 578.9 L1051.8 581.4 L1058.6 581.4 L1059.4 576.3 L1065.4 576.3 L1066.2 579.7 L1069.6 575.5 L1072.1 578.9 L1068.7 581.4 L1073.8 584.0 L1080.6 581.4 L1078.9 575.5 L1077.2 572.1 L1083.1 567.9 L1081.4 564.5 L1075.5 565.4 L1073.8 566.2 L1079.7 562.8 L1081.4 560.3 L1087.3 559.4 L1090.7 562.0 L1091.6 564.5 L1094.9 562.8 L1090.7 556.9 L1090.7 551.0 L1094.9 548.5 L1092.4 551.8 L1095.8 556.1 L1099.2 556.9 L1100.9 558.6 L1105.9 561.1 L1109.3 562.8 L1111.9 563.7 L1112.7 569.6 L1113.5 565.4 L1112.7 559.4 L1110.2 554.4 L1109.8 555.2 L1114.1 554.1 L1118.5 550.9 L1121.7 546.5 L1127.2 541.1 L1132.6 538.9 L1135.9 540.0 L1142.4 541.1 L1146.7 542.2 L1147.8 544.3 L1149.0 537.0 L1151.1 530.2 L1146.7 529.1 L1143.5 524.8 L1138.0 517.0 L1132.6 511.7 L1128.3 508.5 L1128.3 505.2 L1123.9 506.3 L1118.5 505.2 L1110.9 506.3 L1100.0 509.6 L1089.6 509.3 L1080.9 506.4 L1072.2 507.8 L1063.5 503.5 L1056.2 502.0 L1059.1 496.2 L1054.8 490.4 L1049.0 484.6 L1041.7 484.6 L1034.5 480.3 L1031.0 478.3 L1022.3 484.0 L1015.1 489.9 L1010.7 498.6 L1010.0 505.0 L1008.8 508.8 L1006.9 513.8 L1010.0 516.3 L1010.6 520.0 L1012.5 521.3 L1010.6 523.8 L1014.4 525.6 L1012.5 528.8 L1010.0 532.5 L1009.4 536.3 L1008.1 540.4 Z" fill="#dc9479"/>
<path d="M967.0 233.5 L962.6 234.9 L958.3 239.3 L956.8 246.5 L951.0 249.4 L947.4 253.8 L946.7 258.1 L940.9 262.5 L934.3 265.4 L931.4 269.7 L933.8 275.3 L931.1 279.3 L925.2 282.0 L919.8 283.3 L921.2 287.3 L919.8 292.6 L919.8 297.9 L925.8 303.9 L926.5 307.2 L925.2 313.8 L927.8 320.5 L925.2 328.4 L933.1 331.1 L926.5 333.7 L930.5 336.4 L933.1 339.0 L930.5 348.4 L937.1 349.7 L942.4 345.7 L938.4 355.0 L935.8 357.6 L939.8 363.0 L946.4 365.6 L950.4 370.9 L954.4 374.9 L961.4 369.5 L967.2 369.0 L975.9 371.5 L981.7 373.3 L987.5 369.7 L994.8 366.8 L1002.0 359.6 L1007.8 359.6 L1010.7 352.3 L1015.1 349.4 L1019.4 349.4 L1019.4 343.6 L1020.9 337.8 L1022.3 329.1 L1025.2 320.4 L1022.3 314.6 L1027.0 308.5 L1019.2 304.5 L1012.0 300.0 L1004.0 297.0 L1004.6 294.3 L1001.7 288.6 L1003.2 279.9 L1007.5 277.0 L1009.0 269.0 L1003.2 263.9 L995.9 259.6 L994.5 250.9 L985.8 250.9 L982.9 246.5 L980.0 243.6 L975.7 245.1 L972.8 239.3 L968.4 236.4 L967.0 233.5 Z" fill="#d5736b"/>
<path d="M923.8 473.9 L926.7 474.6 L931.0 481.2 L932.5 488.4 L928.1 492.8 L922.3 499.3 L918.0 489.9 L915.1 485.5 L919.4 475.4 Z" fill="#dcdcdc"/>
<path d="M904.9 404.3 L910.0 405.0 L910.7 415.0 L911.0 424.0 L906.0 421.0 L904.5 412.0 Z" fill="#dcdcdc"/>
<path d="M931.0 332.5 L940.0 333.0 L946.0 336.5 L941.0 340.0 L934.0 338.0 Z" fill="#dcdcdc"/>
<path d="M906.6 280.6 L912.5 279.3 L917.2 283.3 L919.8 292.6 L919.8 300.5 L915.9 303.2 L909.2 301.9 L907.9 296.6 L903.9 297.9 L899.9 291.2 L905.2 288.6 L906.6 284.6 Z" fill="#de8f73"/>
<path d="M894.6 282.0 L899.9 280.0 L902.6 283.3 L898.6 286.6 L895.3 285.9 Z" fill="#de8f73"/>
<path d="M925.2 303.2 L930.5 299.9 L935.8 301.9 L939.8 305.9 L937.1 312.5 L938.4 321.8 L933.1 325.8 L925.2 328.4 L927.8 320.5 L925.2 313.8 L926.5 307.2 Z" fill="#de8f73"/>
<path d="M917.2 309.8 L922.5 309.2 L924.5 312.5 L919.8 313.8 Z" fill="#de8f73"/>
<path d="M921.2 336.4 L926.5 335.0 L929.0 339.0 L926.5 344.4 L922.5 343.0 Z" fill="#de8f73"/>
<path d="M764.5 261.6 L774.6 260.9 L770.3 267.8 Z" fill="#de8f73"/>
<path d="M769.6 279.5 L773.2 274.3 L774.0 275.5 L770.5 280.0 Z" fill="#de8f73"/>
<path d="M773.2 284.1 L777.2 282.2 L777.5 282.8 L773.5 284.6 Z" fill="#de8f73"/>
<path d="M851.0 294.5 L853.5 294.5 L853.5 297.0 L851.0 297.0 Z" fill="#de8f73"/>
<path d="M1163.0 502.0 L1157.6 500.3 L1153.3 500.9 L1147.8 502.0 L1146.7 498.7 L1143.5 497.1 L1138.0 495.4 L1135.9 496.5 L1131.5 500.3 L1128.3 505.2 L1128.3 508.5 L1132.6 511.7 L1138.0 517.0 L1143.5 524.8 L1146.7 529.1 L1151.1 530.2 L1155.4 527.0 L1156.5 521.5 L1161.0 516.0 L1164.7 511.7 L1164.1 506.3 L1163.0 502.0 Z" fill="#ecd698"/>
<path d="M1109.8 555.2 L1114.1 554.1 L1118.5 550.9 L1121.7 546.5 L1127.2 541.1 L1132.6 538.9 L1135.9 540.0 L1142.4 541.1 L1146.7 542.2 L1147.8 544.3 L1141.0 550.0 L1135.9 557.4 L1130.4 559.6 L1126.1 566.1 L1122.8 563.9 L1118.5 557.4 L1114.1 561.7 L1113.0 568.3 L1110.9 561.7 L1109.8 555.2 Z" fill="#dc8a72"/>
<path d="M1074.5 478.2 L1079.6 473.8 L1083.9 475.3 L1086.1 470.2 L1093.3 466.6 L1099.9 465.5 L1103.5 469.5 L1104.2 476.0 L1105.7 478.9 L1106.0 486.0 L1103.0 492.0 L1099.1 494.9 L1094.1 494.1 L1089.0 494.9 L1085.4 497.0 L1081.0 501.4 L1076.7 505.7 L1073.0 507.2 L1071.6 503.6 L1074.5 497.8 L1073.0 493.4 L1074.5 487.6 L1073.8 481.8 Z" fill="#e2a684"/>
<path d="M969.9 394.9 L973.4 393.8 L978.0 396.1 L983.7 397.2 L982.6 403.0 L981.4 409.9 L987.1 417.9 L986.0 422.5 L980.3 423.6 L975.7 421.3 L973.4 415.6 L972.2 407.6 L971.1 400.7 Z" fill="#ecd698"/>
<path d="M992.9 420.2 L998.6 422.5 L999.8 428.2 L998.6 437.4 L999.8 444.3 L1005.5 442.0 L1007.8 445.4 L1009.0 451.2 L1012.4 458.1 L1014.7 462.7 L1010.1 467.3 L1003.2 467.3 L997.5 469.6 L991.7 465.0 L988.3 459.2 L989.4 451.2 L987.0 440.0 L986.0 430.0 L990.0 423.0 Z" fill="#e3b78a"/>
<path d="M927.5 555.1 L929.1 558.9 L933.5 559.5 L937.8 563.3 L945.4 562.7 L952.0 561.1 L958.5 558.4 L956.0 553.0 L948.0 550.5 L938.0 551.0 L931.0 552.0 Z" fill="#e9c48f"/>
<path d="M981.7 373.3 L984.9 380.0 L988.3 384.6 L991.7 386.9 L991.7 391.5 L986.0 391.5 L983.7 394.9 L983.7 397.2" fill="none"/>
<path d="M987.1 417.9 L992.9 420.2" fill="none"/>
<path d="M1008.1 540.4 L1006.3 539.0 L999.4 533.4 L993.8 533.4 L990.0 539.1 L988.8 537.5 L981.9 539.4 L976.9 536.9 L972.5 536.9 L966.3 540.3 L961.9 538.1 L963.1 536.3 L963.1 531.3 L960.0 530.0 L961.9 527.5 L961.3 524.4 L958.1 523.4 L955.0 526.3 L955.0 529.7 L951.9 529.4 L948.8 525.0 L944.4 523.1 L943.1 520.6 L938.8 521.9 L935.6 524.4 L935.6 529.4 L932.5 533.8 L926.3 536.9 L923.1 536.3 L922.5 538.8 L918.1 538.8 L915.0 533.8 L913.8 530.0 L912.5 526.6 L908.1 527.4" fill="none"/>
<path d="M1031.0 466.7 L1027.3 466.1 L1021.6 465.0 L1016.5 462.3 L1014.7 462.7 L1010.1 467.3 L1003.2 467.3 L997.5 469.6 L991.7 465.0 L988.3 459.2 L978.0 459.2 L971.1 460.4 L964.2 459.2 L961.9 453.5 L954.2 452.2 L948.4 453.6 L947.0 458.0 L944.1 462.3 L936.8 465.2 L931.0 467.4" fill="none"/>
<path d="M881.1 625.9 L888.3 618.6 L891.9 613.8 L899.2 615.0 L904.0 621.1 L899.2 629.5 L895.6 634.3 L882.3 635.6 L879.9 630.7 Z" fill="#e3b78a"/>
<path d="M914.9 657.3 L919.7 650.0 L924.5 652.5 L922.1 658.5 L916.1 660.9 Z" fill="#e3b78a"/>
<path d="M925.7 653.7 L930.0 654.9 L929.4 660.9 L927.0 661.5 L925.1 657.3 Z" fill="#e3b78a"/>
<path d="M944.5 654.9 L947.5 651.3 L951.1 654.9 L949.9 658.5 L945.1 658.5 Z" fill="#e3b78a"/>
<path d="M927.0 634.3 L931.8 631.9 L935.4 636.8 L934.2 641.6 L929.4 642.8 Z" fill="#e3b78a"/>
<path d="M936.6 631.9 L942.7 628.9 L952.3 633.1 L948.7 636.8 L946.3 642.8 L941.4 639.2 Z" fill="#e3b78a"/>
<path d="M955.9 636.2 L960.8 635.0 L965.6 639.2 L960.8 641.6 Z" fill="#e3b78a"/>
<path d="M965.6 626.5 L971.6 622.9 L977.7 624.7 L975.3 628.3 L968.0 629.5 Z" fill="#e3b78a"/>
<path d="M995.8 622.3 L1000.6 623.5 L1003.6 629.5 L999.4 631.3 L995.8 627.1 Z" fill="#e3b78a"/>
<path d="M1016.2 617.1 L1020.6 617.8 L1024.9 623.6 L1021.0 621.0 Z" fill="#e3b78a"/>
<path d="M1021.9 600.4 L1024.9 606.2 L1024.9 613.5 L1020.6 612.0 L1017.7 607.7 Z" fill="#e3b78a"/>
<path d="M862.9 594.5 L871.4 590.3 L872.6 595.7 L867.8 596.9 L873.8 601.7 L870.2 604.8 L865.4 603.0 L864.2 598.1 Z" fill="#e3b78a"/>
<path d="M873.8 609.0 L878.6 610.2 L881.1 613.8 L877.4 618.0 L874.4 616.2 Z" fill="#e3b78a"/>
<path d="M878.6 594.5 L883.5 593.3 L887.1 596.9 L885.9 601.1 L879.9 599.3 Z" fill="#e3b78a"/>
<path d="M882.3 606.0 L885.9 603.6 L888.9 607.2 L884.7 609.6 Z" fill="#e3b78a"/>
<path d="M870.2 583.6 L876.2 580.0 L881.1 582.4 L885.9 583.6 L882.3 589.7 L877.4 588.5 Z" fill="#e3b78a"/>
<path d="M877.0 560.0 L882.0 556.4 L887.1 555.7 L884.9 562.2 L879.1 565.1 Z" fill="#e3b78a"/>
<path d="M886.4 560.7 L893.6 556.4 L900.9 557.8 L899.4 565.1 L892.2 568.0 Z" fill="#e3b78a"/>
<path d="M880.6 569.4 L884.9 567.2 L887.8 570.9 L883.5 573.8 Z" fill="#e3b78a"/>
<path d="M870.4 582.5 L877.7 578.1 L883.5 585.4 L877.7 588.3 Z" fill="#e3b78a"/>
<path d="M862.5 594.1 L870.4 589.7 L874.8 597.0 L870.4 604.2 L864.6 601.3 Z" fill="#e3b78a"/>
<path d="M893.6 576.7 L900.9 573.8 L905.2 579.6 L899.4 586.8 L892.2 585.4 Z" fill="#e3b78a"/>
<path d="M819.3 603.0 L824.0 599.9 L826.6 601.0 L822.0 607.8 Z" fill="#e3b78a"/>
<path d="M1026.4 584.5 L1030.7 577.2 L1035.8 578.0 L1035.1 584.5 L1038.0 588.8 L1043.8 588.8 L1046.7 591.0 L1045.9 599.0 L1038.7 601.2 L1038.0 593.9 L1033.6 594.6 L1034.3 599.0 L1030.7 599.0 L1029.3 595.4 L1027.1 591.7 Z" fill="#dc9479"/>
<path d="M1040.0 580.0 L1043.0 578.7 L1046.7 582.0 L1046.0 588.1 L1041.5 586.0 Z" fill="#dc9479"/>
<path d="M1082.3 584.0 L1087.3 578.9 L1090.7 580.6 L1094.1 578.9 L1092.4 573.8 L1098.3 571.3 L1099.2 567.0 L1102.6 567.9 L1102.6 573.0 L1103.4 580.6 L1105.1 582.3 L1103.4 587.3 L1104.2 592.4 L1099.2 594.1 L1098.3 597.5 L1100.0 598.3 L1094.9 600.0 L1091.6 599.2 L1092.4 595.0 L1089.0 593.3 L1090.7 587.3 L1085.6 589.0 L1083.1 586.5 Z" fill="#dc9479"/>
<path d="M1071.3 588.2 L1075.5 585.6 L1079.7 589.0 L1078.0 595.0 L1073.8 592.4 Z" fill="#dc9479"/>
<path d="M1270.3 307.4 L1276.8 303.8 L1279.7 304.5 L1280.8 309.2 L1275.7 313.6 L1270.3 310.3 Z" fill="#e2a684"/>
<path d="M884.5 742.5 L886.4 738.6 L890.3 732.9 L895.1 729.0 L899.0 727.1 L903.8 725.6 L908.6 724.2 L912.5 722.7 L920.2 722.2 L926.0 719.3 L929.9 719.8 L935.7 717.9 L941.5 718.8 L945.4 722.2 L948.3 723.2 L949.2 728.0 L951.2 729.0 L950.2 732.9 L946.3 736.7 L942.5 741.5 L939.6 746.4 L928.0 748.3 L920.2 750.2 L910.6 752.2 L901.9 753.1 L896.1 756.0 L892.2 754.1 L887.4 749.3 L884.5 747.3 Z" fill="#ecd698"/>
<rect x="1358" y="331" width="2" height="2" fill="#666" stroke="none"/>
<rect x="892" y="763" width="1.2" height="1.2" fill="#888" stroke="none"/>
<rect x="1601.5" y="751.5" width="1.2" height="1.2" fill="#888" stroke="none"/>
<rect x="1611.5" y="750.5" width="1.2" height="1.2" fill="#888" stroke="none"/>
<rect x="1825.5" y="751.5" width="1.2" height="1.2" fill="#888" stroke="none"/>
<rect x="1835.5" y="750.5" width="1.2" height="1.2" fill="#888" stroke="none"/>
<rect x="1844.5" y="750" width="1.2" height="1.2" fill="#888" stroke="none"/>
<rect x="1852.5" y="764" width="1.2" height="1.2" fill="#888" stroke="none"/>
</g>
<g font-family="Liberation Sans, sans-serif" font-size="13" text-anchor="middle" fill="#fff" stroke="#fff" stroke-width="4" stroke-linejoin="round">
<text x="1064.6" y="290.5" font-size="12" textLength="35.2" lengthAdjust="spacingAndGlyphs">강원도</text>
<text x="1064.3" y="308.1" font-size="13" textLength="30.2" lengthAdjust="spacingAndGlyphs">1,521</text>
<text x="969" y="308.1" font-size="12" textLength="56.2" lengthAdjust="spacingAndGlyphs">서울특별시</text>
<text x="965.4" y="325.0" font-size="13" textLength="31.7" lengthAdjust="spacingAndGlyphs">9,776</text>
<text x="904.5" y="324.7" font-size="12" textLength="54.7" lengthAdjust="spacingAndGlyphs">인천광역시</text>
<text x="900.3" y="341.5" font-size="13" textLength="31.5" lengthAdjust="spacingAndGlyphs">2,923</text>
<text x="981" y="341.8" font-size="12" textLength="33.8" lengthAdjust="spacingAndGlyphs">경기도</text>
<text x="981" y="358.5" font-size="13" textLength="36.7" lengthAdjust="spacingAndGlyphs">12,809</text>
<text x="1027" y="376.90000000000003" font-size="12" textLength="44.4" lengthAdjust="spacingAndGlyphs">충청북도</text>
<text x="1027.3" y="393.8" font-size="13" textLength="29.6" lengthAdjust="spacingAndGlyphs">1,605</text>
<text x="936.8" y="404.1" font-size="12" textLength="45.4" lengthAdjust="spacingAndGlyphs">충청남도</text>
<text x="937.2" y="421.9" font-size="13" textLength="30.2" lengthAdjust="spacingAndGlyphs">2,148</text>
<text x="997.3" y="418.1" font-size="12" textLength="77.8" lengthAdjust="spacingAndGlyphs">세종특별자치시</text>
<text x="985" y="436.2" font-size="12" textLength="56.2" lengthAdjust="spacingAndGlyphs">대전광역시</text>
<text x="981.7" y="453.1" font-size="13" textLength="28.0" lengthAdjust="spacingAndGlyphs">1,531</text>
<text x="1102.7" y="435.1" font-size="12" textLength="46.0" lengthAdjust="spacingAndGlyphs">경상북도</text>
<text x="1102" y="453.1" font-size="13" textLength="30.1" lengthAdjust="spacingAndGlyphs">2,681</text>
<text x="972.7" y="496.7" font-size="12" textLength="46.0" lengthAdjust="spacingAndGlyphs">전라북도</text>
<text x="972.3" y="513.5" font-size="13" textLength="29.4" lengthAdjust="spacingAndGlyphs">1,830</text>
<text x="1098.3" y="490.8" font-size="12" textLength="56.9" lengthAdjust="spacingAndGlyphs">대구광역시</text>
<text x="1095" y="508.0" font-size="13" textLength="30.2" lengthAdjust="spacingAndGlyphs">2,465</text>
<text x="1150" y="523.3" font-size="12" textLength="56.2" lengthAdjust="spacingAndGlyphs">울산광역시</text>
<text x="1147.2" y="539.9" font-size="13" textLength="28.7" lengthAdjust="spacingAndGlyphs">1,166</text>
<text x="1070" y="539.3" font-size="12" textLength="45.4" lengthAdjust="spacingAndGlyphs">경상남도</text>
<text x="1069.6" y="555.8" font-size="13" textLength="30.2" lengthAdjust="spacingAndGlyphs">3,355</text>
<text x="1145" y="555.5999999999999" font-size="12" textLength="56.2" lengthAdjust="spacingAndGlyphs">부산광역시</text>
<text x="1141.4" y="572.5" font-size="13" textLength="30.2" lengthAdjust="spacingAndGlyphs">3,429</text>
<text x="956.7" y="554.9" font-size="12" textLength="56.9" lengthAdjust="spacingAndGlyphs">광주광역시</text>
<text x="953.5" y="572.5" font-size="13" textLength="28.7" lengthAdjust="spacingAndGlyphs">1,501</text>
<text x="948.7" y="594.0" font-size="12" textLength="45.4" lengthAdjust="spacingAndGlyphs">전라남도</text>
<text x="949.4" y="610.9" font-size="13" textLength="29.4" lengthAdjust="spacingAndGlyphs">1,796</text>
<text x="929" y="743.3" font-size="12" textLength="78.7" lengthAdjust="spacingAndGlyphs">제주특별자치도</text>
<text x="914.9" y="761.0" font-size="13" textLength="19.8" lengthAdjust="spacingAndGlyphs">634</text>
</g>
<g font-family="Liberation Sans, sans-serif" font-size="13" text-anchor="middle" fill="#111" stroke="#111" stroke-width="0.55">
<text x="1064.6" y="290.5" font-size="12" textLength="35.2" lengthAdjust="spacingAndGlyphs">강원도</text>
<text x="1064.3" y="308.1" font-size="13" textLength="30.2" lengthAdjust="spacingAndGlyphs">1,521</text>
<text x="969" y="308.1" font-size="12" textLength="56.2" lengthAdjust="spacingAndGlyphs">서울특별시</text>
<text x="965.4" y="325.0" font-size="13" textLength="31.7" lengthAdjust="spacingAndGlyphs">9,776</text>
<text x="904.5" y="324.7" font-size="12" textLength="54.7" lengthAdjust="spacingAndGlyphs">인천광역시</text>
<text x="900.3" y="341.5" font-size="13" textLength="31.5" lengthAdjust="spacingAndGlyphs">2,923</text>
<text x="981" y="341.8" font-size="12" textLength="33.8" lengthAdjust="spacingAndGlyphs">경기도</text>
<text x="981" y="358.5" font-size="13" textLength="36.7" lengthAdjust="spacingAndGlyphs">12,809</text>
<text x="1027" y="376.90000000000003" font-size="12" textLength="44.4" lengthAdjust="spacingAndGlyphs">충청북도</text>
<text x="1027.3" y="393.8" font-size="13" textLength="29.6" lengthAdjust="spacingAndGlyphs">1,605</text>
<text x="936.8" y="404.1" font-size="12" textLength="45.4" lengthAdjust="spacingAndGlyphs">충청남도</text>
<text x="937.2" y="421.9" font-size="13" textLength="30.2" lengthAdjust="spacingAndGlyphs">2,148</text>
<text x="997.3" y="418.1" font-size="12" textLength="77.8" lengthAdjust="spacingAndGlyphs">세종특별자치시</text>
<text x="985" y="436.2" font-size="12" textLength="56.2" lengthAdjust="spacingAndGlyphs">대전광역시</text>
<text x="981.7" y="453.1" font-size="13" textLength="28.0" lengthAdjust="spacingAndGlyphs">1,531</text>
<text x="1102.7" y="435.1" font-size="12" textLength="46.0" lengthAdjust="spacingAndGlyphs">경상북도</text>
<text x="1102" y="453.1" font-size="13" textLength="30.1" lengthAdjust="spacingAndGlyphs">2,681</text>
<text x="972.7" y="496.7" font-size="12" textLength="46.0" lengthAdjust="spacingAndGlyphs">전라북도</text>
<text x="972.3" y="513.5" font-size="13" textLength="29.4" lengthAdjust="spacingAndGlyphs">1,830</text>
<text x="1098.3" y="490.8" font-size="12" textLength="56.9" lengthAdjust="spacingAndGlyphs">대구광역시</text>
<text x="1095" y="508.0" font-size="13" textLength="30.2" lengthAdjust="spacingAndGlyphs">2,465</text>
<text x="1150" y="523.3" font-size="12" textLength="56.2" lengthAdjust="spacingAndGlyphs">울산광역시</text>
<text x="1147.2" y="539.9" font-size="13" textLength="28.7" lengthAdjust="spacingAndGlyphs">1,166</text>
<text x="1070" y="539.3" font-size="12" textLength="45.4" lengthAdjust="spacingAndGlyphs">경상남도</text>
<text x="1069.6" y="555.8" font-size="13" textLength="30.2" lengthAdjust="spacingAndGlyphs">3,355</text>
<text x="1145" y="555.5999999999999" font-size="12" textLength="56.2" lengthAdjust="spacingAndGlyphs">부산광역시</text>
<text x="1141.4" y="572.5" font-size="13" textLength="30.2" lengthAdjust="spacingAndGlyphs">3,429</text>
<text x="956.7" y="554.9" font-size="12" textLength="56.9" lengthAdjust="spacingAndGlyphs">광주광역시</text>
<text x="953.5" y="572.5" font-size="13" textLength="28.7" lengthAdjust="spacingAndGlyphs">1,501</text>
<text x="948.7" y="594.0" font-size="12" textLength="45.4" lengthAdjust="spacingAndGlyphs">전라남도</text>
<text x="949.4" y="610.9" font-size="13" textLength="29.4" lengthAdjust="spacingAndGlyphs">1,796</text>
<text x="929" y="743.3" font-size="12" textLength="78.7" lengthAdjust="spacingAndGlyphs">제주특별자치도</text>
<text x="914.9" y="761.0" font-size="13" textLength="19.8" lengthAdjust="spacingAndGlyphs">634</text>
</g></svg>
<div class="a" style="left:716px;top:414px;width:17.5px;height:52.5px;background:#fff;border:1px solid #a9a9a9;border-left:none;border-radius:0 5px 5px 0;box-shadow:2px 2px 3px rgba(0,0,0,0.25)"></div>
<div class="a" style="left:721px;top:438.2px;width:0;height:0;border-top:3.7px solid transparent;border-bottom:3.7px solid transparent;border-right:5px solid #666"></div>
</body></html>
